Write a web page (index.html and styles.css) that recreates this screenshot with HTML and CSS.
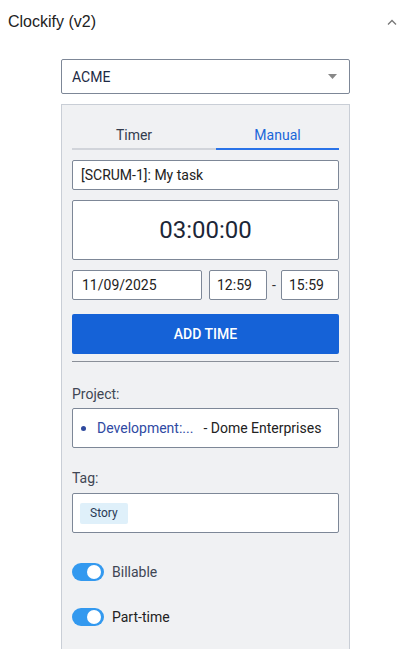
FILE: index.html
```html
<!DOCTYPE html>
<html lang="en">

<head>
  <meta charset="UTF-8">
  <meta name="viewport" content="width=device-width, initial-scale=1.0">
  <title>Clockify (v2)</title>
  <link rel="stylesheet" href="styles.css">
</head>

<body>

  <div class="section-header">
    <span class="section-title">Clockify (v2)</span>
    <svg class="chevron" width="10" height="6" viewBox="0 0 10 6">
      <path d="M1 5.5 L5 1.5 L9 5.5" fill="none" stroke="#777" stroke-width="1.3" />
    </svg>
  </div>

  <div class="content">
    <div class="workspace-select">
      <span>ACME</span>
      <svg class="caret" width="9" height="5" viewBox="0 0 9 5">
        <path d="M0 0 H9 L4.5 5 Z" fill="#888" />
      </svg>
    </div>

    <div class="panel">
      <div class="tabs">
        <div class="tab">Timer</div>
        <div class="tab active">Manual</div>
      </div>

      <div class="field task">[SCRUM-1]: My task</div>

      <div class="field duration">03:00:00</div>

      <div class="date-row">
        <div class="field date">11/09/2025</div>
        <div class="field time">12:59</div>
        <span class="dash">-</span>
        <div class="field time">15:59</div>
      </div>

      <button class="add-btn">ADD TIME</button>

      <hr class="divider">

      <div class="label">Project:</div>
      <div class="field project">
        <span class="dot"></span>
        <span class="project-name">Development:...</span>
        <span class="client">- Dome Enterprises</span>
      </div>

      <div class="label tag-label">Tag:</div>
      <div class="field tags">
        <span class="chip">Story</span>
      </div>

      <div class="switch-row">
        <span class="switch"><span class="knob"></span></span>
        <span class="switch-label">Billable</span>
      </div>

      <div class="switch-row">
        <span class="switch"><span class="knob"></span></span>
        <span class="switch-label dark">Part-time</span>
      </div>
    </div>
  </div>

</body>

</html>
```

FILE: styles.css
```css
/* หน้าหลัก */
html,
body {
  height: 100%;
}

body {
  margin: 0;
  padding: 0;
  display: flex;
  flex-direction: column;
  font-family: Roboto, "Liberation Sans", sans-serif;
  background-color: #fff;
  color: #222;
  overflow: hidden;
}

.section-header {
  display: flex;
  justify-content: space-between;
  align-items: center;
  height: 44px;
  padding: 0 14px 0 8px;
}

.section-title {
  font-family: "Liberation Sans", Arial, sans-serif;
  font-size: 16px;
  color: #222;
}

.chevron {
  margin-top: -1px;
}

.content {
  flex: 1;
  display: flex;
  flex-direction: column;
  padding: 15px 61px 0 61px;
}

.workspace-select {
  height: 33px;
  border: 1px solid #7d8797;
  border-radius: 2px;
  display: flex;
  align-items: center;
  justify-content: space-between;
  padding: 0 12px 0 10px;
  font-size: 14px;
  color: #1d2a44;
}

.panel {
  flex: 1;
  margin-top: 10px;
  background-color: #f0f1f3;
  border: 1px solid #c9ced6;
  border-bottom: none;
  padding: 22px 10px 0 10px;
}

.tabs {
  display: flex;
  margin-bottom: 10px;
}

.tab {
  flex: none;
  width: 144px;
  box-sizing: border-box;
  text-align: center;
  font-size: 14px;
  color: #333c4e;
  padding-right: 20px;
  padding-bottom: 5px;
  border-bottom: 2px solid #d1d4da;
}

.tab.active {
  flex: 1;
  width: auto;
  padding-right: 0;
  color: #1a66d9;
  border-bottom-color: #2a73e8;
}

.field {
  background-color: #fff;
  border: 1px solid #7d8797;
  border-radius: 2px;
  box-sizing: border-box;
  font-size: 14px;
  color: #222;
  display: flex;
  align-items: center;
}

.task {
  height: 30px;
  padding: 0 8px;
  margin-bottom: 10px;
}

.duration {
  height: 60px;
  justify-content: center;
  font-size: 24px;
  color: #1c2637;
  margin-bottom: 10px;
}

.date-row {
  display: flex;
  align-items: center;
  margin-bottom: 14px;
}

.date {
  width: 130px;
  height: 30px;
  padding: 0 9px;
  margin-right: 7px;
}

.time {
  width: 58px;
  height: 30px;
  padding: 0 7px;
}

.dash {
  width: 14px;
  text-align: center;
  font-size: 14px;
  color: #333;
}

.add-btn {
  display: block;
  width: 100%;
  height: 40px;
  border: none;
  border-radius: 2px;
  background-color: #1562d7;
  color: #fff;
  font-family: Roboto, "Liberation Sans", sans-serif;
  font-size: 14px;
  font-weight: 500;
}

.divider {
  border: none;
  border-top: 1px solid #8a8f98;
  margin: 7px 0 0 0;
}

.label {
  font-size: 14px;
  line-height: 16px;
  color: #3f4654;
  margin: 24px 0 6px 0;
}

.tag-label {
  margin-top: 22px;
  margin-bottom: 7px;
}

.project {
  height: 40px;
  padding: 0 8px;
}

.dot {
  width: 5px;
  height: 5px;
  border-radius: 50%;
  background-color: #2f4a9e;
  margin-right: 11px;
}

.project-name {
  color: #2f4aa3;
  margin-right: 10px;
}

.client {
  color: #222;
}

.tags {
  height: 40px;
  padding: 0 7px;
}

.chip {
  background-color: #dff0fa;
  color: #2a3a55;
  font-size: 12px;
  line-height: 13px;
  padding: 4px 10px;
  border-radius: 2px;
}

.switch-row {
  display: flex;
  align-items: center;
  margin-top: 30px;
}

.switch-row + .switch-row {
  margin-top: 27px;
}

.switch {
  position: relative;
  width: 32px;
  height: 18px;
  border-radius: 9px;
  background-color: #3399ef;
  margin-right: 8px;
}

/* ปุ่มวงกลมของสวิตช์ */
.knob {
  position: absolute;
  top: 2px;
  right: 3px;
  width: 14px;
  height: 14px;
  border-radius: 50%;
  background-color: #fff;
}

.switch-label {
  font-size: 14px;
  color: #3f4654;
}

.switch-label.dark {
  color: #222;
}
```
